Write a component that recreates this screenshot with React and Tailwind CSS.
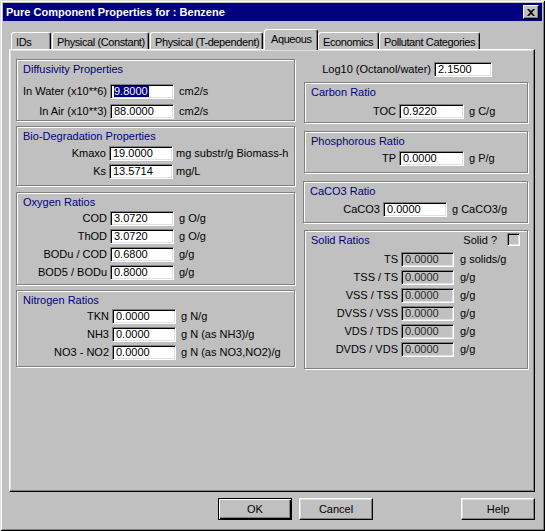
import React from "react";

const sunken =
  "border border-t-[#808080] border-l-[#808080] border-b-white border-r-white shadow-[inset_1px_1px_0_#000,inset_-1px_-1px_0_#dfdfdf]";

function Field({ value, w, disabled, selected }) {
  return (
    <div
      className={`h-[15px] ${w} ${sunken} ${
        disabled ? "bg-[#c0c0c0] text-[#2a2a2a]" : "bg-white text-black"
      } flex items-center pl-[3px] shrink-0 overflow-hidden`}
    >
      {selected ? (
        <span className="bg-[#000080] text-white leading-[11px] pr-[1px]">{value}</span>
      ) : (
        <span className="leading-[13px]">{value}</span>
      )}
    </div>
  );
}

function Row({ label, labelW, value, fieldW, unit, unitMl, disabled, selected }) {
  return (
    <div className="flex items-center h-[15px]">
      <div className={`${labelW} shrink-0 text-right pr-[3px] whitespace-nowrap leading-[13px]`}>
        {label}
      </div>
      <Field value={value} w={fieldW} disabled={disabled} selected={selected} />
      <div className={`${unitMl} whitespace-nowrap leading-[13px]`}>{unit}</div>
    </div>
  );
}

function Group({ title, cls, rowsCls, children, right }) {
  return (
    <div
      className={`${cls} border border-[#808080] shadow-[inset_1px_1px_0_#fff,1px_1px_0_#fff] flex flex-col shrink-0`}
    >
      <div className="mt-[3px] h-[13px] flex items-center pl-[6px] pr-[7px] justify-between">
        <span className="text-[#000080] leading-[13px] whitespace-nowrap">{title}</span>
        {right}
      </div>
      <div className={`flex flex-col ${rowsCls}`}>{children}</div>
    </div>
  );
}

function Tab({ label, w, ml, selected }) {
  if (selected) {
    return (
      <div
        className={`${w} ${ml} h-[21px] -mb-[1px] relative z-10 bg-[#c0c0c0] border-l border-t border-r border-white border-r-black rounded-t-[3px] shadow-[inset_-1px_0_0_#808080] pl-[6px] pt-[3px] leading-[13px] whitespace-nowrap overflow-hidden tracking-[-0.4px]`}
      >
        {label}
      </div>
    );
  }
  return (
    <div
      className={`${w} ${ml} h-[17px] border-l border-t border-r border-white border-r-black rounded-t-[3px] shadow-[inset_-1px_0_0_#808080] pl-[4px] pt-[3px] leading-[13px] whitespace-nowrap overflow-hidden tracking-[-0.4px]`}
    >
      {label}
    </div>
  );
}

function Button({ label, w, ml, def }) {
  return (
    <div
      className={`${w} ${ml} h-[22px] flex items-center justify-center leading-[13px] ${
        def
          ? "border border-black shadow-[inset_1px_1px_0_#fff,inset_-1px_-1px_0_#000,inset_-2px_-2px_0_#808080]"
          : "border border-t-white border-l-white border-r-black border-b-black shadow-[inset_-1px_-1px_0_#808080,inset_1px_1px_0_#dfdfdf]"
      }`}
    >
      {label}
    </div>
  );
}

export default function App() {
  return (
    <div className="w-[545px] h-[531px] bg-[#c0c0c0] p-[3px] flex flex-col text-[11px] text-black font-['Liberation_Sans',Arial,sans-serif] shadow-[inset_1px_1px_0_#dfdfdf,inset_-1px_-1px_0_#000,inset_2px_2px_0_#fff,inset_-2px_-2px_0_#808080] overflow-hidden">
      {/* Title bar */}
      <div className="h-[18px] bg-[#000080] flex items-center justify-between pl-[3px] pr-[3px] shrink-0">
        <span className="text-white font-bold leading-[14px] whitespace-nowrap">
          Pure Component Properties for : Benzene
        </span>
        <div className="w-[16px] h-[14px] bg-[#c0c0c0] border border-t-white border-l-white border-r-black border-b-black shadow-[inset_-1px_-1px_0_#808080] flex items-center justify-center">
          <svg width="8" height="7" viewBox="0 0 8 7">
            <path d="M0 0h2l2 2 2-2h2L5 3.5 8 7H6L4 5 2 7H0l3-3.5z" fill="#000" />
          </svg>
        </div>
      </div>

      {/* Tabs */}
      <div className="mt-[8px] h-[20px] flex items-end shrink-0">
        <Tab label="IDs" w="w-[40px]" ml="ml-[8px]" />
        <Tab label="Physical (Constant)" w="w-[97px]" ml="ml-[1px]" />
        <Tab label="Physical (T-dependent)" w="w-[113px]" ml="ml-[1px]" />
        <Tab label="Aqueous" w="w-[54px]" ml="ml-[1px]" selected />
        <Tab label="Economics" w="w-[61px]" ml="ml-0" />
        <Tab label="Pollutant Categories" w="w-[101px]" ml="ml-0" />
      </div>

      {/* Panel */}
      <div className="ml-[6px] w-[526px] h-[443px] shrink-0 border border-t-white border-l-white border-r-black border-b-black shadow-[inset_-1px_-1px_0_#808080,inset_1px_1px_0_#dfdfdf] flex">
        {/* Left column */}
        <div className="ml-[6px] mt-[9px] w-[279px] flex flex-col">
          <Group title="Diffusivity Properties" cls="w-[279px] h-[62px]" rowsCls="mt-[8px] gap-[5px]">
            <Row label="In Water (x10**6)" labelW="w-[93px]" value="9.8000" fieldW="w-[64px]" unit="cm2/s" unitMl="ml-[5px]" selected />
            <Row label="In Air (x10**3)" labelW="w-[93px]" value="88.0000" fieldW="w-[64px]" unit="cm2/s" unitMl="ml-[5px]" />
          </Group>
          <Group title="Bio-Degradation Properties" cls="w-[279px] h-[60px] mt-[5px]" rowsCls="mt-[3px] gap-[3px]">
            <Row label="Kmaxo" labelW="w-[92px]" value="19.0000" fieldW="w-[64px]" unit="mg substr/g Biomass-h" unitMl="ml-[3px]" />
            <Row label="Ks" labelW="w-[92px]" value="13.5714" fieldW="w-[64px]" unit="mg/L" unitMl="ml-[3px]" />
          </Group>
          <Group title="Oxygen Ratios" cls="w-[279px] h-[93px] mt-[6px]" rowsCls="mt-[2px] gap-[3px]">
            <Row label="COD" labelW="w-[93px]" value="3.0720" fieldW="w-[64px]" unit="g O/g" unitMl="ml-[5px]" />
            <Row label="ThOD" labelW="w-[93px]" value="3.0720" fieldW="w-[64px]" unit="g O/g" unitMl="ml-[5px]" />
            <Row label="BODu / COD" labelW="w-[93px]" value="0.6800" fieldW="w-[64px]" unit="g/g" unitMl="ml-[5px]" />
            <Row label="BOD5 / BODu" labelW="w-[93px]" value="0.8000" fieldW="w-[64px]" unit="g/g" unitMl="ml-[5px]" />
          </Group>
          <Group title="Nitrogen Ratios" cls="w-[279px] h-[77px] mt-[5px]" rowsCls="mt-[2px] gap-[3px]">
            <Row label="TKN" labelW="w-[95px]" value="0.0000" fieldW="w-[64px]" unit="g N/g" unitMl="ml-[5px]" />
            <Row label="NH3" labelW="w-[95px]" value="0.0000" fieldW="w-[64px]" unit="g N (as NH3)/g" unitMl="ml-[5px]" />
            <Row label="NO3 - NO2" labelW="w-[95px]" value="0.0000" fieldW="w-[64px]" unit="g N (as NO3,NO2)/g" unitMl="ml-[5px]" />
          </Group>
        </div>

        {/* Right column */}
        <div className="ml-[9px] mt-[12px] w-[224px] flex flex-col">
          <Row label="Log10 (Octanol/water)" labelW="w-[130px]" value="2.1500" fieldW="w-[58px]" unit="" unitMl="ml-0" />
          <Group title="Carbon Ratio" cls="w-[224px] h-[41px] mt-[5px]" rowsCls="mt-[5px]">
            <Row label="TOC" labelW="w-[94px]" value="0.9220" fieldW="w-[65px]" unit="g C/g" unitMl="ml-[5px]" />
          </Group>
          <Group title="Phosphorous Ratio" cls="w-[224px] h-[42px] mt-[8px]" rowsCls="mt-[3px]">
            <Row label="TP" labelW="w-[94px]" value="0.0000" fieldW="w-[65px]" unit="g P/g" unitMl="ml-[5px]" />
          </Group>
          <Group title="CaCO3 Ratio" cls="w-[225px] -ml-[1px] h-[42px] mt-[8px]" rowsCls="mt-[4px]">
            <Row label="CaCO3" labelW="w-[79px]" value="0.0000" fieldW="w-[64px]" unit="g CaCO3/g" unitMl="ml-[5px]" />
          </Group>
          <Group
            title="Solid Ratios"
            cls="w-[224px] h-[139px] mt-[7px]"
            rowsCls="mt-[5px] gap-[3px]"
            right={
              <div className="flex items-center">
                <span className="leading-[13px]">Solid ?</span>
                <div className={`ml-[10px] w-[13px] h-[13px] -mt-[2px] bg-[#c0c0c0] ${sunken}`} />
              </div>
            }
          >
            <Row label="TS" labelW="w-[96px]" value="0.0000" fieldW="w-[53px]" unit="g solids/g" unitMl="ml-[6px]" disabled />
            <Row label="TSS / TS" labelW="w-[96px]" value="0.0000" fieldW="w-[53px]" unit="g/g" unitMl="ml-[6px]" disabled />
            <Row label="VSS / TSS" labelW="w-[96px]" value="0.0000" fieldW="w-[53px]" unit="g/g" unitMl="ml-[6px]" disabled />
            <Row label="DVSS / VSS" labelW="w-[96px]" value="0.0000" fieldW="w-[53px]" unit="g/g" unitMl="ml-[6px]" disabled />
            <Row label="VDS / TDS" labelW="w-[96px]" value="0.0000" fieldW="w-[53px]" unit="g/g" unitMl="ml-[6px]" disabled />
            <Row label="DVDS / VDS" labelW="w-[96px]" value="0.0000" fieldW="w-[53px]" unit="g/g" unitMl="ml-[6px]" disabled />
          </Group>
        </div>
      </div>

      {/* Buttons */}
      <div className="mt-[6px] flex shrink-0">
        <Button label="OK" w="w-[74px]" ml="ml-[215px]" def />
        <Button label="Cancel" w="w-[74px]" ml="ml-[7px]" />
        <Button label="Help" w="w-[74px]" ml="ml-[88px]" />
      </div>
    </div>
  );
}
